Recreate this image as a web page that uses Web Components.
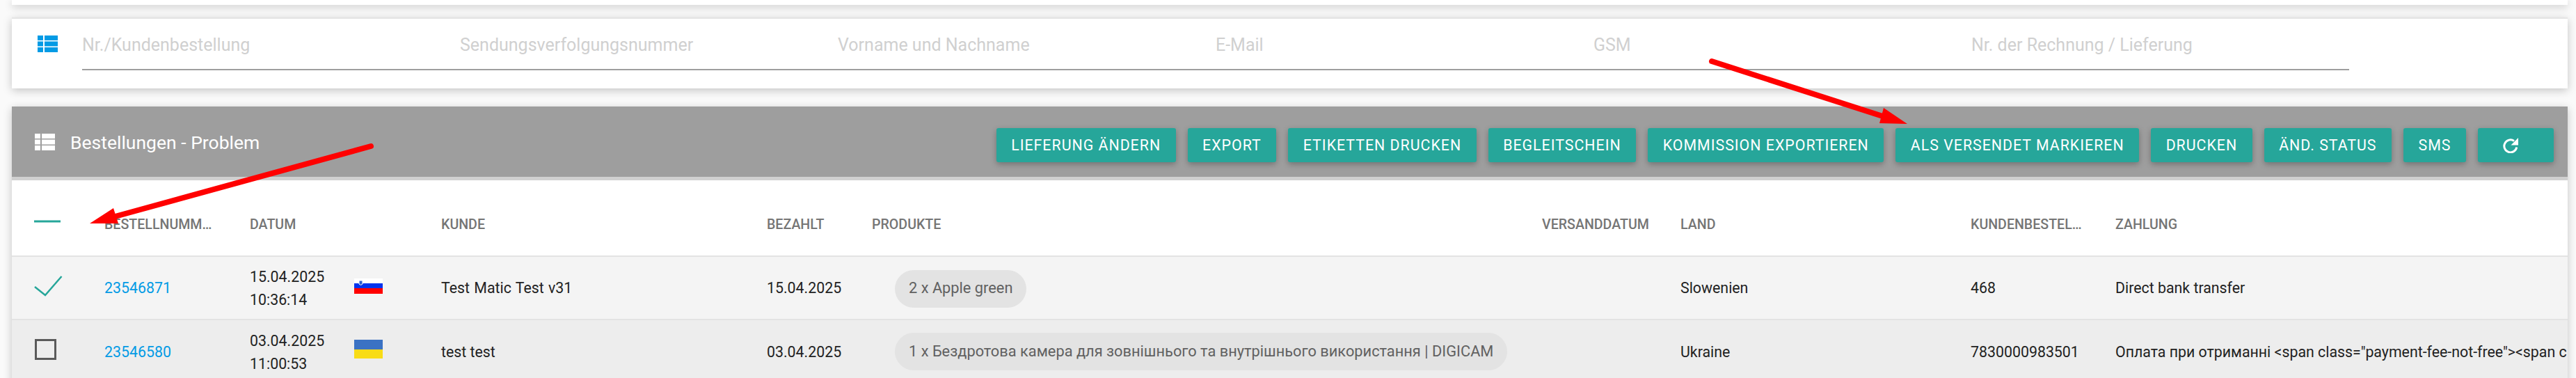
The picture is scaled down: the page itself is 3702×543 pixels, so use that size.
<!DOCTYPE html>
<html>
<head>
<meta charset="utf-8">
<style>
  html, body { margin: 0; padding: 0; background: #fafafa; height: 543px; overflow: hidden; }
  body { font-family: Roboto, "Liberation Sans", sans-serif; position: relative; }
</style>
</head>
<body>
<orders-page>
  <search-card>
    <search-field label="Nr./Kundenbestellung"></search-field>
    <search-field label="Sendungsverfolgungsnummer"></search-field>
    <search-field label="Vorname und Nachname"></search-field>
    <search-field label="E-Mail"></search-field>
    <search-field label="GSM"></search-field>
    <search-field label="Nr. der Rechnung / Lieferung"></search-field>
  </search-card>
  <orders-card title-text="Bestellungen - Problem">
    <action-button slot="actions">Lieferung ändern</action-button>
    <action-button slot="actions">Export</action-button>
    <action-button slot="actions">Etiketten drucken</action-button>
    <action-button slot="actions">Begleitschein</action-button>
    <action-button slot="actions">Kommission exportieren</action-button>
    <action-button slot="actions">Als versendet markieren</action-button>
    <action-button slot="actions">Drucken</action-button>
    <action-button slot="actions">Änd. Status</action-button>
    <action-button slot="actions">SMS</action-button>
    <action-button slot="actions" icon="refresh"></action-button>

    <order-row head>
      <tick-box slot="check" state="some"></tick-box>
      <span slot="id">BESTELLNUMM…</span>
      <span slot="date">DATUM</span>
      <span slot="customer">KUNDE</span>
      <span slot="paid">BEZAHLT</span>
      <span slot="products">PRODUKTE</span>
      <span slot="shipped">VERSANDDATUM</span>
      <span slot="country">LAND</span>
      <span slot="ref">KUNDENBESTEL…</span>
      <span slot="payment">ZAHLUNG</span>
    </order-row>
    <order-row style="--row-bg:#f4f4f4">
      <tick-box slot="check" state="on"></tick-box>
      <span slot="id" class="link">23546871</span>
      <span slot="date">15.04.2025<br>10:36:14</span>
      <country-flag slot="flag" code="si"></country-flag>
      <span slot="customer" style="word-spacing:1px">Test Matic Test v31</span>
      <span slot="paid">15.04.2025</span>
      <product-chip slot="products">2 x Apple green</product-chip>
      <span slot="country">Slowenien</span>
      <span slot="ref">468</span>
      <span slot="payment">Direct bank transfer</span>
    </order-row>
    <order-row tall style="--row-bg:#ededed">
      <tick-box slot="check"></tick-box>
      <span slot="id" class="link">23546580</span>
      <span slot="date">03.04.2025<br>11:00:53</span>
      <country-flag slot="flag" code="ua"></country-flag>
      <span slot="customer">test test</span>
      <span slot="paid">03.04.2025</span>
      <product-chip slot="products" style="margin-bottom:3px">1 x Бездротова камера для зовнішнього та внутрішнього використання | DIGICAM</product-chip>
      <span slot="country">Ukraine</span>
      <span slot="ref">7830000983501</span>
      <span slot="payment">Оплата при отриманні &lt;span class="payment-fee-not-free"&gt;&lt;span c</span>
    </order-row>
  </orders-card>
</orders-page>
<red-arrows></red-arrows>

<script>
const listIcon = `<svg width="29" height="24" viewBox="0 0 29 24" style="display:block"><path fill="currentColor" d="M0 0h8v7H0zM10 0h19v7H10zM0 8.500h8v7H0zM10 8.500h19v7H10zM0 17h8v7H0zM10 17h19v7H10z"/></svg>`;

class OrdersPage extends HTMLElement {
  constructor() {
    super();
    this.attachShadow({mode: 'open'}).innerHTML = `
      <style>
        :host { display: block; height: 543px; padding: 0 12px 0 17px; overflow: hidden; box-sizing: border-box; }
        .top { height: 7px; background: #fff; box-shadow: 0 3px 12px rgba(0,0,0,.22); }
        .stack { display: flex; flex-direction: column; gap: 26px; padding-top: 18px; }
      </style>
      <div class="top"></div>
      <div class="stack"><slot></slot></div>`;
  }
}

class SearchCard extends HTMLElement {
  constructor() {
    super();
    this.attachShadow({mode: 'open'}).innerHTML = `
      <style>
        :host { display: flex; height: 102px; box-sizing: border-box; background: #fff; border-top: 2px solid #e4e4e4; box-shadow: 0 3px 12px rgba(0,0,0,.22); padding: 24px 314px 0 37px; color: #039be5; }
        .icon { width: 64px; flex: none; }
        .fields { display: flex; flex: 1; }
      </style>
      <div class="icon">${listIcon}</div>
      <div class="fields"><slot></slot></div>`;
  }
}

class SearchField extends HTMLElement {
  constructor() {
    super();
    this.attachShadow({mode: 'open'}).innerHTML = `
      <style>
        :host { display: block; flex: 1; height: 50px; box-sizing: border-box; border-bottom: 2px solid #9e9e9e; font-size: 25px; color: #d0d0d0; line-height: 27px; }
      </style>
      <span></span>`;
    this.shadowRoot.querySelector('span').textContent = this.getAttribute('label');
  }
}

class OrdersCard extends HTMLElement {
  constructor() {
    super();
    this.attachShadow({mode: 'open'}).innerHTML = `
      <style>
        :host { display: block; background: #fff; box-shadow: 0 3px 12px rgba(0,0,0,.22); }
        .bar { height: 101px; box-sizing: border-box; background: #9e9e9e; display: flex; align-items: flex-start; justify-content: space-between; color: #fff; padding: 31px 20px 0 33px; }
        .title { display: flex; align-items: center; gap: 22px; font-size: 26.500px; height: 40px; }
        .title h2 { font: inherit; margin: 0; }
        .actions { display: flex; gap: 17px; }
        .rule { height: 5px; background: #d0d0d0; }
      </style>
      <div class="bar">
        <div class="title">${listIcon}<h2></h2></div>
        <div class="actions"><slot name="actions"></slot></div>
      </div>
      <div class="rule"></div>
      <slot></slot>`;
    this.shadowRoot.querySelector('h2').textContent = this.getAttribute('title-text');
  }
}

class ActionButton extends HTMLElement {
  constructor() {
    super();
    const icon = this.getAttribute('icon') === 'refresh'
      ? `<svg width="22" height="22" viewBox="0 0 22 22" fill="none"><path d="M16 4.500A9 9 0 1 0 19.700 13.500" stroke="#fff" stroke-width="3"/><path fill="#fff" d="M22 0v10.500H11.500z"/></svg>`
      : '<slot></slot>';
    this.attachShadow({mode: 'open'}).innerHTML = `
      <style>
        :host { display: flex; align-items: center; height: 49px; box-sizing: border-box; padding: 0 21.500px; background: #26a69a; color: #fff; border-radius: 3px; font-size: 21.330px; letter-spacing: 1px; text-transform: uppercase; white-space: nowrap; box-shadow: 0 3px 8px rgba(0,0,0,.28); }
        :host([icon]) { padding: 0 51px 0 36px; }
      </style>
      ${icon}`;
  }
}

class OrderRow extends HTMLElement {
  constructor() {
    super();
    const names = ['check', 'id', 'date', 'flag', 'customer', 'paid', 'products', 'shipped', 'country', 'ref', 'payment'];
    this.attachShadow({mode: 'open'}).innerHTML = `
      <style>
        :host { display: grid; grid-template-columns: 133px 209px 150px 125px 468px 151px 963px 199px 417px 208px 650px; align-items: center; height: 91px; padding-top: 2px; box-sizing: border-box; border-bottom: 2px solid #e3e3e3; background: var(--row-bg, #fff); font-size: 21.330px; line-height: 32.500px; color: #222; overflow: hidden; white-space: nowrap; }
        :host([tall]) { height: 95px; padding-top: 0; }
        :host([head]) { height: 110px; font-size: 19.600px; font-weight: 500; color: #757575; padding-top: 20px; }
        :host(:not([head])) .products { padding-left: 33px; }
        .payment { overflow: hidden; }
      </style>
      ${names.map(n => `<div class="${n}"><slot name="${n}"></slot></div>`).join('')}`;
  }
  connectedCallback() {
    this.querySelectorAll('.link').forEach(e => { e.style.color = '#039be5'; });
  }
}

class TickBox extends HTMLElement {
  constructor() {
    super();
    const state = this.getAttribute('state');
    let mark = '<rect x="34.500" y="1.500" width="28" height="27" fill="none" stroke="#5a5a5a" stroke-width="3"/>';
    let shift = 9;
    if (state === 'some') { mark = '<rect x="32" y="13.500" width="38" height="3" fill="#26a69a"/>'; shift = 10; }
    if (state === 'on') { mark = '<path d="M33 16 48 28 71.500 1" fill="none" stroke="#26a69a" stroke-width="2.500"/>'; shift = 7; }
    this.attachShadow({mode: 'open'}).innerHTML = `
      <style>:host { display: block; margin-bottom: ${shift}px; } svg { display: block; }</style>
      <svg width="80" height="30" viewBox="0 0 80 30">${mark}</svg>`;
  }
}

class CountryFlag extends HTMLElement {
  constructor() {
    super();
    const si = `<rect width="41" height="7" fill="#fff"/><rect y="7" width="41" height="7" fill="#0033ee"/><rect y="14" width="41" height="8" fill="#ff0000"/><path d="M7 3h5v5q-2.500 3-5 0z" fill="#2a5fd0" stroke="#fff"/>`;
    const ua = `<rect width="41" height="14" fill="#3b72c4"/><rect y="14" width="41" height="13" fill="#f8dc17"/>`;
    const code = this.getAttribute('code');
    const h = code === 'si' ? 22 : 27;
    const shift = code === 'si' ? 7 : 10;
    this.attachShadow({mode: 'open'}).innerHTML = `
      <style>:host { display: block; margin-bottom: ${shift}px; } svg { display: block; }</style>
      <svg width="41" height="${h}" viewBox="0 0 41 ${h}">${code === 'si' ? si : ua}</svg>`;
  }
}

class ProductChip extends HTMLElement {
  constructor() {
    super();
    this.attachShadow({mode: 'open'}).innerHTML = `
      <style>
        :host { display: inline-flex; align-items: center; height: 54px; padding: 0 20px; border-radius: 27px; background: #e3e3e3; color: #616161; font-size: 21.800px; }
      </style>
      <slot></slot>`;
  }
}

class RedArrows extends HTMLElement {
  constructor() {
    super();
    this.attachShadow({mode: 'open'}).innerHTML = `
      <style>:host { position: absolute; left: 0; top: 0; width: 3702px; height: 543px; pointer-events: none; }</style>
      <svg width="3702" height="543" viewBox="0 0 3702 543">
        <path d="M533 210 158 313" stroke="#f00" stroke-width="8" stroke-linecap="round"/>
        <path d="M129 321 163 299 170 321z" fill="#f00"/>
        <path d="M2460 88 2715 170" stroke="#f00" stroke-width="8" stroke-linecap="round"/>
        <path d="M2741 178 2707 155 2701 177z" fill="#f00"/>
      </svg>`;
  }
}

customElements.define('orders-page', OrdersPage);
customElements.define('search-card', SearchCard);
customElements.define('search-field', SearchField);
customElements.define('orders-card', OrdersCard);
customElements.define('action-button', ActionButton);
customElements.define('order-row', OrderRow);
customElements.define('tick-box', TickBox);
customElements.define('country-flag', CountryFlag);
customElements.define('product-chip', ProductChip);
customElements.define('red-arrows', RedArrows);
</script>
</body>
</html>
